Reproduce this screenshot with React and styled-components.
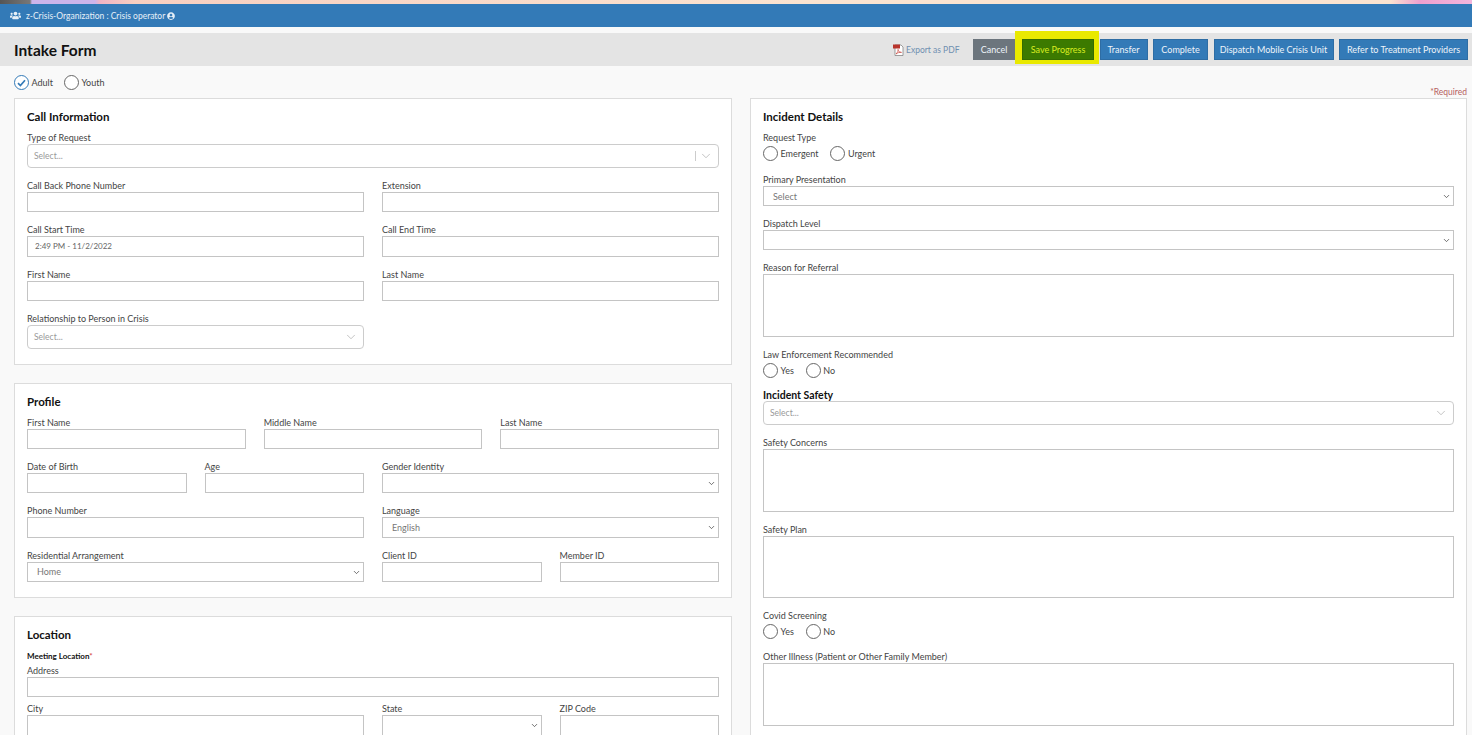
import React from "react";
import styled, { createGlobalStyle } from "styled-components";
import { FaUsers, FaUserCircle } from "react-icons/fa";
import { ChevronDown } from "lucide-react";

const GlobalStyle = createGlobalStyle`
  html, body {
    margin: 0;
    height: 735px;
    overflow: hidden;
    background: #f9f9f9;
    font-family: "Lato", "Open Sans", sans-serif;
  }
  * {
    box-sizing: border-box;
  }
`;

// Thin strip of the browser window showing above the page
const TopStrip = styled.div`
  height: 4px;
  background: linear-gradient(
    to right,
    #555 0,
    #777 30px,
    #cdb4ea 32px,
    #cdb4ea 95px,
    #f0b4c4 100px,
    #f8cfc0 135px,
    #fbe3d0 800px,
    #fbe3d0 1390px,
    #ee9fce 1420px,
    #f3b6dc 1472px
  );
`;

const OrgBar = styled.div`
  height: 23px;
  padding-left: 10px;
  display: flex;
  align-items: center;
  gap: 5px;
  background: #337ab7;
  color: #e6eff7;
  font-size: 8.5px;
`;

const OrgName = styled.span`
  display: flex;
  align-items: center;
  gap: 2px;
`;

const PageHeader = styled.div`
  height: 33px;
  margin-top: 6px;
  padding: 0 4px 0 14px;
  display: flex;
  align-items: center;
  justify-content: space-between;
  background: #e4e4e4;
`;

const PageTitle = styled.h1`
  margin: 0;
  font-size: 15.5px;
  font-weight: 700;
  color: #111;
`;

const Toolbar = styled.div`
  display: flex;
  align-items: center;
  gap: 5.5px;
`;

const ExportLink = styled.a`
  display: flex;
  align-items: center;
  gap: 1px;
  margin-right: 7.5px;
  color: #6f8fb0;
  font-size: 8.5px;
`;

const Button = styled.button`
  height: 21px;
  width: ${(p) => p.$width}px;
  padding: 0;
  border: 1px solid ${(p) => (p.$variant === "gray" ? "#6c757d" : "#2e6da4")};
  background: ${(p) => (p.$variant === "gray" ? "#6c757d" : "#337ab7")};
  color: #eef4fa;
  font-family: inherit;
  font-size: 9px;
  white-space: nowrap;
`;

const SaveButton = styled(Button)`
  margin-left: 1px;
  border-color: #356c00;
  background: #3c7a00;
  color: #d8ec20;
  box-shadow: -1px -2px 0 6px #e9e900;
`;

const SubHeader = styled.div`
  height: 32px;
  padding: 9px 5px 1px 14px;
  display: flex;
  justify-content: space-between;
`;

const AudienceRow = styled.div`
  display: flex;
  gap: 11px;
`;

const RequiredNote = styled.span`
  align-self: flex-end;
  color: #b5605e;
  font-size: 8.5px;
  line-height: 9px;
`;

const RadioLabel = styled.label`
  display: flex;
  align-items: center;
  gap: 2.5px;
  height: 15px;
  color: #444;
  font-size: 9px;
`;

const RadioCircle = styled.span`
  width: 15px;
  height: 15px;
  border-radius: 50%;
  border: ${(p) => (p.$checked ? "1.5px solid #337ab7" : "1px solid #666")};
  background: #fff;
  display: flex;
  align-items: center;
  justify-content: center;
`;

const Columns = styled.div`
  padding: 0 5px 0 14px;
  display: grid;
  grid-template-columns: 718px 717px;
  column-gap: 18px;
  align-items: start;
`;

const Column = styled.div`
  display: flex;
  flex-direction: column;
  gap: 18px;
`;

const Card = styled.section`
  padding: 11px 12px 15px;
  background: #fff;
  border: 1px solid #dcdcdc;
`;

const CardTitle = styled.h2`
  margin: 0 0 8px;
  font-size: 11.5px;
  line-height: 14px;
  font-weight: 700;
  color: #111;
`;

const GridRow = styled.div`
  display: grid;
  grid-template-columns: repeat(12, 1fr);
  column-gap: 18px;
  margin-bottom: ${(p) => p.$gap ?? 12}px;

  &:last-child {
    margin-bottom: 0;
  }
`;

const Field = styled.div`
  grid-column: span ${(p) => p.$span || 12};
  min-width: 0;
`;

const FieldLabel = styled.label`
  display: block;
  height: 12px;
  font-size: 9px;
  line-height: 12px;
  color: #444;
  white-space: nowrap;
`;

const SectionLabel = styled.div`
  padding-top: 1px;
  margin-bottom: 4px;
  font-size: 8px;
  line-height: 10px;
  font-weight: 700;
  color: #111;

  span {
    color: #d9534f;
  }
`;

const GroupLabel = styled.div`
  font-size: 10.5px;
  line-height: 12px;
  font-weight: 700;
  color: #111;
`;

const TextInput = styled.input`
  display: block;
  width: 100%;
  height: 20.3px;
  padding: 0 7px;
  background: #fff;
  border: 1px solid #c4c4c4;
  border-top-width: 1.5px;
  color: #666;
  font-family: inherit;
  font-size: 8px;
  outline: none;
`;

const TextArea = styled.textarea`
  display: block;
  width: 100%;
  height: ${(p) => p.$height || 63}px;
  background: #fff;
  border: 1px solid #c4c4c4;
  border-top-width: 1.5px;
  resize: none;
  outline: none;
`;

const SelectBox = styled.div`
  position: relative;
  height: 20.3px;
  padding-left: 9px;
  display: flex;
  align-items: center;
  background: #fff;
  border: 1px solid #c4c4c4;
  color: #777;
  font-size: 9px;

  svg {
    position: absolute;
    right: 2px;
    top: 5px;
    color: #444;
  }
`;

const ComboBox = styled.div`
  position: relative;
  height: 24px;
  padding-left: 6px;
  display: flex;
  align-items: center;
  background: #fff;
  border: 1px solid #ccc;
  border-radius: 4px;
  color: #999;
  font-size: 8.5px;

  svg {
    position: absolute;
    right: 5px;
    top: 4px;
    color: #aaa;
  }
`;

const ComboDivider = styled.span`
  position: absolute;
  right: 22px;
  top: 6px;
  bottom: 6px;
  width: 1px;
  background: #ccc;
`;

const RadioGroup = styled.div`
  display: flex;
  gap: 12px;
  margin-top: 2px;
`;

const Radio = ({ label, checked }) => (
  <RadioLabel>
    <RadioCircle $checked={checked}>
      {checked && (
        <svg width="9" height="8" viewBox="0 0 9 8" fill="none">
          <path d="M1 4.2 L3.4 6.6 L8 1.2" stroke="#337ab7" strokeWidth="1.7" />
        </svg>
      )}
    </RadioCircle>
    {label}
  </RadioLabel>
);

const PdfIcon = () => (
  <svg width="13" height="12" viewBox="0 0 12 12">
    <path d="M2.5 1 H8.5 L10.5 3 V11.5 H2.5 Z" fill="#fff" stroke="#777" strokeWidth="0.7" />
    <rect x="0.5" y="0.5" width="7" height="4" fill="#b8342c" />
    <path d="M3.5 10 C5 8.5 6 6.5 5.6 5.4 C5.4 6.8 6.6 8.4 9 8.4 C7.4 8 5 8.8 3.5 10 Z" fill="none" stroke="#c9463e" strokeWidth="0.7" />
  </svg>
);

const Input = ({ label, span, value }) => (
  <Field $span={span}>
    <FieldLabel>{label}</FieldLabel>
    <TextInput readOnly value={value || ""} />
  </Field>
);

const Select = ({ label, span, value }) => (
  <Field $span={span}>
    <FieldLabel>{label}</FieldLabel>
    <SelectBox>
      {value}
      <ChevronDown size={9} strokeWidth={2} />
    </SelectBox>
  </Field>
);

const Combo = ({ label, span, divider }) => (
  <Field $span={span}>
    {label && <FieldLabel>{label}</FieldLabel>}
    <ComboBox>
      Select...
      {divider && <ComboDivider />}
      <ChevronDown size={14} strokeWidth={1.2} />
    </ComboBox>
  </Field>
);

const Area = ({ label, height }) => (
  <Field>
    <FieldLabel>{label}</FieldLabel>
    <TextArea readOnly $height={height} />
  </Field>
);

export default function App() {
  return (
    <>
      <GlobalStyle />
      <TopStrip />
      <OrgBar>
        <FaUsers size={11} />
        <OrgName>
          z-Crisis-Organization : Crisis operator <FaUserCircle size={8} />
        </OrgName>
      </OrgBar>

      <PageHeader>
        <PageTitle>Intake Form</PageTitle>
        <Toolbar>
          <ExportLink>
            <PdfIcon />
            Export as PDF
          </ExportLink>
          <Button $variant="gray" $width={43}>Cancel</Button>
          <SaveButton $width={72}>Save Progress</SaveButton>
          <Button $width={48}>Transfer</Button>
          <Button $width={55}>Complete</Button>
          <Button $width={120}>Dispatch Mobile Crisis Unit</Button>
          <Button $width={129}>Refer to Treatment Providers</Button>
        </Toolbar>
      </PageHeader>

      <SubHeader>
        <AudienceRow>
          <Radio label="Adult" checked />
          <Radio label="Youth" />
        </AudienceRow>
        <RequiredNote>*Required</RequiredNote>
      </SubHeader>

      <Columns>
        <Column>
          <Card>
            <CardTitle>Call Information</CardTitle>
            <GridRow>
              <Combo label="Type of Request" divider />
            </GridRow>
            <GridRow>
              <Input span={6} label="Call Back Phone Number" />
              <Input span={6} label="Extension" />
            </GridRow>
            <GridRow>
              <Input span={6} label="Call Start Time" value="2:49 PM - 11/2/2022" />
              <Input span={6} label="Call End Time" />
            </GridRow>
            <GridRow>
              <Input span={6} label="First Name" />
              <Input span={6} label="Last Name" />
            </GridRow>
            <GridRow>
              <Combo span={6} label="Relationship to Person in Crisis" />
            </GridRow>
          </Card>

          <Card>
            <CardTitle>Profile</CardTitle>
            <GridRow>
              <Input span={4} label="First Name" />
              <Input span={4} label="Middle Name" />
              <Input span={4} label="Last Name" />
            </GridRow>
            <GridRow>
              <Input span={3} label="Date of Birth" />
              <Input span={3} label="Age" />
              <Select span={6} label="Gender Identity" />
            </GridRow>
            <GridRow>
              <Input span={6} label="Phone Number" />
              <Select span={6} label="Language" value="English" />
            </GridRow>
            <GridRow>
              <Select span={6} label="Residential Arrangement" value="Home" />
              <Input span={3} label="Client ID" />
              <Input span={3} label="Member ID" />
            </GridRow>
          </Card>

          <Card>
            <CardTitle>Location</CardTitle>
            <SectionLabel>
              Meeting Location<span>*</span>
            </SectionLabel>
            <GridRow $gap={6}>
              <Input label="Address" />
            </GridRow>
            <GridRow>
              <Input span={6} label="City" />
              <Select span={3} label="State" />
              <Input span={3} label="ZIP Code" />
            </GridRow>
          </Card>
        </Column>

        <Column>
          <Card>
            <CardTitle>Incident Details</CardTitle>
            <GridRow $gap={13}>
              <Field>
                <FieldLabel>Request Type</FieldLabel>
                <RadioGroup>
                  <Radio label="Emergent" />
                  <Radio label="Urgent" />
                </RadioGroup>
              </Field>
            </GridRow>
            <GridRow $gap={11.5}>
              <Select label="Primary Presentation" value="Select" />
            </GridRow>
            <GridRow>
              <Select label="Dispatch Level" />
            </GridRow>
            <GridRow>
              <Area label="Reason for Referral" />
            </GridRow>
            <GridRow $gap={11}>
              <Field>
                <FieldLabel>Law Enforcement Recommended</FieldLabel>
                <RadioGroup>
                  <Radio label="Yes" />
                  <Radio label="No" />
                </RadioGroup>
              </Field>
            </GridRow>
            <GridRow $gap={11.5}>
              <Field>
                <GroupLabel>Incident Safety</GroupLabel>
                <Combo />
              </Field>
            </GridRow>
            <GridRow>
              <Area label="Safety Concerns" />
            </GridRow>
            <GridRow>
              <Area label="Safety Plan" height={62} />
            </GridRow>
            <GridRow>
              <Field>
                <FieldLabel>Covid Screening</FieldLabel>
                <RadioGroup>
                  <Radio label="Yes" />
                  <Radio label="No" />
                </RadioGroup>
              </Field>
            </GridRow>
            <GridRow>
              <Area label="Other Illness (Patient or Other Family Member)" />
            </GridRow>
          </Card>
        </Column>
      </Columns>
    </>
  );
}
